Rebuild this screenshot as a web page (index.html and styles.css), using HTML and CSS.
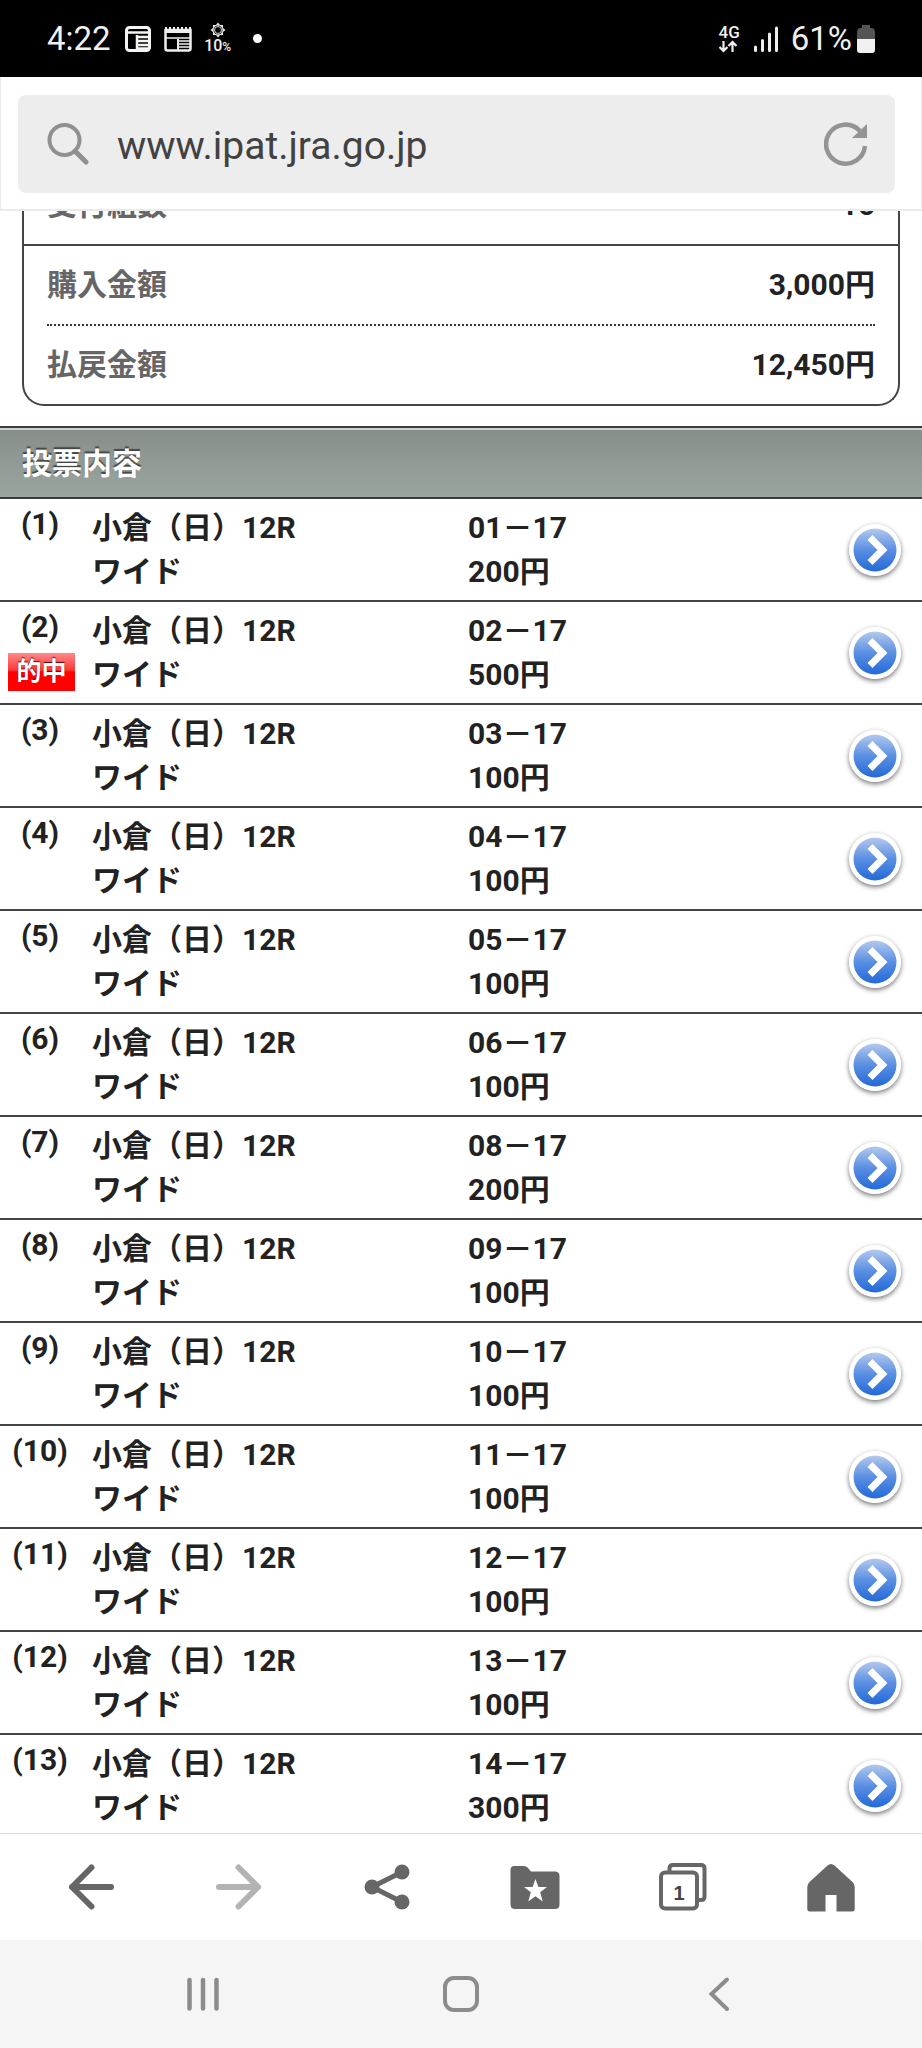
FILE: index.html
```html
<!DOCTYPE html>
<html lang="ja">
<head>
    <meta charset="UTF-8">
    <meta name="viewport" content="width=device-width, initial-scale=1.0">
    <title>投票内容</title>
    <link rel="stylesheet" href="styles.css">
</head>
<body>
    <!-- 共通アイコン -->
    <svg class="defs" width="0" height="0" aria-hidden="true">
        <defs>
            <linearGradient id="blue" x1="0" y1="0" x2="0" y2="1">
                <stop offset="0" stop-color="#b4c9ee"/>
                <stop offset="0.5" stop-color="#5a8fe2"/>
                <stop offset="1" stop-color="#2369d9"/>
            </linearGradient>
            <symbol id="go" viewBox="0 0 52 52">
                <circle cx="26" cy="26" r="26" fill="#fff"/>
                <circle cx="26" cy="26" r="21.5" fill="url(#blue)"/>
                <path d="M21 13.5L33.5 26L21 38.500" fill="none" stroke="#fff" stroke-width="7"/>
            </symbol>
        </defs>
    </svg>

    <div class="status">
        <span class="time">4:22</span>
        <svg class="st_icon" width="26" height="26" viewBox="0 0 26 26">
            <rect x="1.500" y="1.500" width="23" height="23" rx="3" fill="none" stroke="#f2f5f0" stroke-width="3"/>
            <path d="M2 6.500H24M12 9V24M12 11H24M12 15H24M12 19H24M12 22.500H24" fill="none" stroke="#f2f5f0" stroke-width="2.500"/>
        </svg>
        <svg class="st_icon" width="28" height="26" viewBox="0 0 28 26">
            <path d="M2 1V4M6 1V4M10 1V4M14 1V4M18 1V4M22 1V4M26 1V4" stroke="#eee" stroke-width="2"/>
            <path d="M1.500 4H26.500V22.500Q26.500 24.500 24.500 24.500H3.500Q1.500 24.500 1.500 22.500Z" fill="none" stroke="#eee" stroke-width="2.500"/>
            <path d="M2 6H26M14 13V24" stroke="#eee" stroke-width="2"/>
            <path d="M2 12H26M14 15H26M14 18H26M14 21H26" stroke="#eee" stroke-width="1.500"/>
        </svg>
        <span class="uv">
            <svg width="16" height="16" viewBox="0 0 16 16">
                <path d="M8 0.500L10 3H13V6L15.500 8L13 10V13H10L8 15.500L6 13H3V10L0.500 8L3 6V3H6Z" fill="#eee"/>
                <circle cx="8" cy="8" r="4.500" fill="#000"/>
                <circle cx="8" cy="8" r="3.500" fill="none" stroke="#ddd" stroke-width="1"/>
            </svg>
            <span>10<small>%</small></span>
        </span>
        <span class="dot"></span>
        <span class="net">
            <b>4G</b>
            <svg width="20" height="13" viewBox="0 0 20 13">
                <path d="M5.500 1V11M1.500 7L5.500 11L9.500 7M14.500 12V2M10.500 6L14.500 2L18.500 6" fill="none" stroke="#eee" stroke-width="2.200"/>
            </svg>
        </span>
        <svg class="signal" width="24" height="26" viewBox="0 0 24 26">
            <path d="M1.500 21V24.500M8.500 14.500V24.500M15.500 8V24.500M22.500 2V24.500" stroke="#eee" stroke-width="3" stroke-linecap="round"/>
        </svg>
        <span class="percent">61%</span>
        <svg class="battery" width="18" height="28" viewBox="0 0 18 28">
            <path d="M5 0H13V3H15.500Q18 4 18 7V14H0V7Q0 4 2.500 3H5Z" fill="#555"/>
            <path d="M0 14H18V25Q18 28 15 28H3Q0 28 0 25Z" fill="#f0f0f0"/>
        </svg>
    </div>

    <header class="bar">
        <form class="address">
            <svg width="42" height="42" viewBox="0 0 42 42">
                <circle cx="17.500" cy="17" r="15" fill="none" stroke="#909090" stroke-width="4"/>
                <path d="M28 28L39 39" stroke="#909090" stroke-width="5" stroke-linecap="round"/>
            </svg>
            <input type="text" class="url" value="www.ipat.jra.go.jp" aria-label="URL">
            <button type="button" aria-label="再読み込み">
                <svg width="44" height="44" viewBox="0 0 44 44">
                    <path d="M41 24A19.500 19.500 0 1 1 36 9" fill="none" stroke="#949494" stroke-width="4.500"/>
                    <path d="M43 2V16H28Z" fill="#949494"/>
                </svg>
            </button>
        </form>
    </header>

    <main class="page">
        <dl class="summary">
            <div class="full"><dt>受付組数</dt><dd>16</dd></div>
            <div><dt>購入金額</dt><dd>3,000円</dd></div>
            <div><dt>払戻金額</dt><dd>12,450円</dd></div>
        </dl>
        <h2>投票内容</h2>
        <ol class="bets">
            <li><a href="#">
                <span class="no">(1)</span>
                <span>小倉（日）12R<br>ワイド</span>
                <span>01－17<br>200円</span>
                <svg class="go"><use href="#go"/></svg>
            </a></li>
            <li><a href="#">
                <span class="no">(2)<em class="hit">的中</em></span>
                <span>小倉（日）12R<br>ワイド</span>
                <span>02－17<br>500円</span>
                <svg class="go"><use href="#go"/></svg>
            </a></li>
            <li><a href="#">
                <span class="no">(3)</span>
                <span>小倉（日）12R<br>ワイド</span>
                <span>03－17<br>100円</span>
                <svg class="go"><use href="#go"/></svg>
            </a></li>
            <li><a href="#">
                <span class="no">(4)</span>
                <span>小倉（日）12R<br>ワイド</span>
                <span>04－17<br>100円</span>
                <svg class="go"><use href="#go"/></svg>
            </a></li>
            <li><a href="#">
                <span class="no">(5)</span>
                <span>小倉（日）12R<br>ワイド</span>
                <span>05－17<br>100円</span>
                <svg class="go"><use href="#go"/></svg>
            </a></li>
            <li><a href="#">
                <span class="no">(6)</span>
                <span>小倉（日）12R<br>ワイド</span>
                <span>06－17<br>100円</span>
                <svg class="go"><use href="#go"/></svg>
            </a></li>
            <li><a href="#">
                <span class="no">(7)</span>
                <span>小倉（日）12R<br>ワイド</span>
                <span>08－17<br>200円</span>
                <svg class="go"><use href="#go"/></svg>
            </a></li>
            <li><a href="#">
                <span class="no">(8)</span>
                <span>小倉（日）12R<br>ワイド</span>
                <span>09－17<br>100円</span>
                <svg class="go"><use href="#go"/></svg>
            </a></li>
            <li><a href="#">
                <span class="no">(9)</span>
                <span>小倉（日）12R<br>ワイド</span>
                <span>10－17<br>100円</span>
                <svg class="go"><use href="#go"/></svg>
            </a></li>
            <li><a href="#">
                <span class="no">(10)</span>
                <span>小倉（日）12R<br>ワイド</span>
                <span>11－17<br>100円</span>
                <svg class="go"><use href="#go"/></svg>
            </a></li>
            <li><a href="#">
                <span class="no">(11)</span>
                <span>小倉（日）12R<br>ワイド</span>
                <span>12－17<br>100円</span>
                <svg class="go"><use href="#go"/></svg>
            </a></li>
            <li><a href="#">
                <span class="no">(12)</span>
                <span>小倉（日）12R<br>ワイド</span>
                <span>13－17<br>100円</span>
                <svg class="go"><use href="#go"/></svg>
            </a></li>
            <li><a href="#">
                <span class="no">(13)</span>
                <span>小倉（日）12R<br>ワイド</span>
                <span>14－17<br>300円</span>
                <svg class="go"><use href="#go"/></svg>
            </a></li>
        </ol>
    </main>

    <nav class="tools">
        <button type="button" aria-label="戻る">
            <svg width="50" height="50" viewBox="0 0 50 50">
                <path d="M25.500 5.500L6 25L25.500 44.500M6 25H45" fill="none" stroke="#666" stroke-width="6" stroke-linecap="round" stroke-linejoin="round"/>
            </svg>
        </button>
        <button type="button" aria-label="進む" disabled>
            <svg width="50" height="50" viewBox="0 0 50 50">
                <path d="M24.500 5.500L44 25L24.500 44.500M44 25H5" fill="none" stroke="#b3b3b3" stroke-width="6" stroke-linecap="round" stroke-linejoin="round"/>
            </svg>
        </button>
        <button type="button" aria-label="共有">
            <svg width="50" height="50" viewBox="0 0 50 50">
                <path d="M40 10L10 25L40 40" fill="none" stroke="#666" stroke-width="5"/>
                <circle cx="10" cy="25" r="7.500" fill="#666"/>
                <circle cx="40" cy="10" r="7.500" fill="#666"/>
                <circle cx="40" cy="40" r="7.500" fill="#666"/>
            </svg>
        </button>
        <button type="button" aria-label="ブックマーク">
            <svg width="50" height="50" viewBox="0 0 50 50">
                <path d="M4.500 4H14Q16 4 17.500 5.500L21 9.500H45Q49.500 9.500 49.500 14V42.500Q49.500 47 45 47H5Q0.500 47 0.500 42.500V8Q0.500 4 4.500 4Z" fill="#666"/>
                <path d="M25.500 17L28.400 25H37L30.200 30.200L32.700 39.500L25.500 34.200L18.300 39.500L20.800 30.200L14 25H22.600Z" fill="#fff"/>
            </svg>
        </button>
        <button type="button" aria-label="タブ">
            <svg width="50" height="50" viewBox="0 0 50 50">
                <path d="M11.500 9V6.500Q11.500 3 15 3H43Q46.500 3 46.500 6.500V34.500Q46.500 38 43 38H40" fill="none" stroke="#666" stroke-width="4"/>
                <rect x="3" y="10.500" width="36" height="36" rx="4" fill="#fff" stroke="#666" stroke-width="4"/>
                <text class="tab_no" x="21" y="38" text-anchor="middle">1</text>
            </svg>
        </button>
        <button type="button" aria-label="ホーム">
            <svg width="50" height="50" viewBox="0 0 50 50">
                <path d="M21.500 3.500Q25 0.500 28.500 3.500L46.500 20Q48.700 22 48.700 25V47Q48.700 49.500 46 49.500H30.500V33H19.500V49.500H4Q1.300 49.500 1.300 47V25Q1.300 22 3.500 20Z" fill="#666"/>
            </svg>
        </button>
    </nav>
    <nav class="system">
        <button type="button" aria-label="履歴">
            <svg width="40" height="40" viewBox="0 0 40 40">
                <path d="M6.500 6V34.500M20 6V34.500M33.500 6V34.500" stroke="#8c8c8c" stroke-width="4.500" stroke-linecap="round"/>
            </svg>
        </button>
        <button type="button" aria-label="ホーム画面">
            <svg width="40" height="40" viewBox="0 0 40 40">
                <rect x="4" y="4" width="32" height="32" rx="9" fill="none" stroke="#8c8c8c" stroke-width="4"/>
            </svg>
        </button>
        <button type="button" aria-label="前の画面">
            <svg width="40" height="40" viewBox="0 0 40 40">
                <path d="M28 5.500L12.500 20L28 35" fill="none" stroke="#8c8c8c" stroke-width="4" stroke-linecap="round"/>
            </svg>
        </button>
    </nav>
</body>
</html>
```
FILE: styles.css
```css
*{
    margin: 0;
    padding: 0;
    box-sizing: border-box;
}
body{
    height: 100vh;
    display: flex;
    flex-direction: column;
    background-color: #fff;
    color: #222;
    font-family: Roboto, "Noto Sans CJK JP", sans-serif;
    font-size: 30px;
}
svg{
    display: block;
    flex: none;
}
.defs{
    position: absolute;
}
button{
    border: none;
    background: none;
}

/* ステータスバー */
.status{
    height: 77px;
    flex: none;
    display: flex;
    align-items: center;
    padding: 0 47px;
    background-color: #000;
    color: #f0f0f0;
    font-size: 33px;
}
.time{
    margin-right: 14px;
}
.st_icon{
    margin-right: 13px;
}
.uv{
    width: 26px;
    display: flex;
    flex-direction: column;
    align-items: center;
    font-size: 16px;
    font-weight: 500;
    line-height: 15px;
}
.uv small{
    font-size: 12px;
}
.dot{
    width: 9px;
    height: 9px;
    margin-left: 22px;
    border-radius: 50%;
    background-color: #fff;
}
.net{
    margin-left: auto;
    margin-right: 14px;
    font-size: 17px;
    line-height: 15px;
}
.net b{
    display: block;
    font-weight: 500;
}
.signal{
    margin-right: 13px;
}
.battery{
    margin-left: 5px;
}

/* アドレスバー */
.bar{
    flex: none;
    padding: 18px 26px 16px 17px;
    border: solid #eaeaea;
    border-width: 0 1px 2px;
}
.address{
    height: 98px;
    display: flex;
    align-items: center;
    gap: 28px;
    padding: 0 27px 0 29px;
    border-radius: 8px;
    background-color: #ededed;
}
.url{
    flex: 1;
    min-width: 0;
    padding-top: 4px;
    border: none;
    outline: none;
    background: none;
    color: #424242;
    font-family: inherit;
    font-size: 39px;
}

/* ページ本体 */
.page{
    flex: 1;
    min-height: 0;
    overflow: hidden;
}
.summary{
    margin: -45px 22px 20px;
    border: 2px solid #444;
    border-top: none;
    border-radius: 0 0 22px 22px;
    font-weight: bold;
}
.summary div{
    display: flex;
    justify-content: space-between;
    margin: 0 23px;
    padding: 20px 0;
    line-height: 38px;
    border-bottom: 2px dotted #333;
}
.summary .full{
    margin: 0;
    padding: 20px 23px;
    border-bottom: 2px solid #444;
}
.summary div:last-child{
    border-bottom: none;
}
.summary dt{
    color: #666;
}
h2{
    padding: 15px 22px 13px;
    border: solid #3a3c3b;
    border-width: 2px 0;
    box-shadow: inset 0 2px #c9d3ce;
    background: linear-gradient(#878e89, #9ba59f);
    color: #fff;
    font-size: 30px;
    line-height: 41px;
    text-shadow: 0 -2px 1px #444;
}
.bets{
    list-style: none;
    font-weight: bold;
}
.bets a{
    display: grid;
    grid-template-columns: 80px 376fr 393fr 52px;
    padding: 7px 21px 6px 0;
    border-bottom: 2px solid #444;
    color: inherit;
    line-height: 44px;
    text-decoration: none;
}
.bets span{
    padding-left: 12px;
}
.bets .no{
    padding: 0;
    line-height: 36px;
    text-align: center;
}
.hit{
    display: block;
    margin: 8px 5px 0 8px;
    background: linear-gradient(#ff8a8a, #f83838 45%, #f00 50%);
    color: #fff;
    font-size: 25px;
    font-style: normal;
    line-height: 38px;
    text-shadow: 0 -1px 1px #600;
}
.go{
    width: 52px;
    height: 52px;
    align-self: center;
    border-radius: 50%;
    box-shadow: 0 2px 5px #777;
}

/* 下部メニュー */
.tools{
    flex: none;
    display: flex;
    padding: 28px 17px;
    border-top: 1px solid #ddd;
    background-color: #fff;
}
.tools button,
.system button{
    flex: 1;
    display: flex;
    justify-content: center;
}
.tab_no{
    fill: #444;
    font-size: 20px;
    font-weight: bold;
}
.system{
    flex: none;
    display: flex;
    padding: 34px 74px;
    background-color: #f5f5f5;
}
```
